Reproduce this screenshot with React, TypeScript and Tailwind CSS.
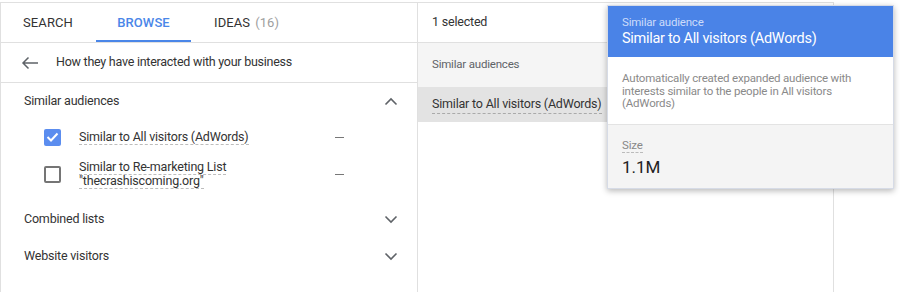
import React from "react";

const font = { fontFamily: "Roboto, 'Liberation Sans', sans-serif" };

function ChevronUp() {
  return (
    <svg width="14" height="9" viewBox="0 0 14 9" className="block">
      <polyline points="1.5,7.5 7,2 12.5,7.5" fill="none" stroke="#5f6368" strokeWidth="1.6" />
    </svg>
  );
}
function ChevronDown() {
  return (
    <svg width="14" height="9" viewBox="0 0 14 9" className="block">
      <polyline points="1.5,1.5 7,7 12.5,1.5" fill="none" stroke="#5f6368" strokeWidth="1.6" />
    </svg>
  );
}

function Dash() {
  return <span className="block w-[9px] h-px bg-[#777]" />;
}

export default function App() {
  return (
    <div className="relative w-[900px] h-[292px] bg-white overflow-hidden text-[#333]" style={font}>
      <div className="flex pt-[2px] h-full">
        {/* Left panel */}
        <div className="w-[418px] border-t border-l border-r border-[#e0e0e0] flex flex-col">
          <div className="flex h-[40px] border-b border-[#e0e0e0] text-[13px] tracking-[0.1px]">
            <div className="w-[95px] flex items-center pl-[22px] text-[#333]">SEARCH</div>
            <div className="w-[95px] flex items-center justify-center relative text-[#4a86e8] font-medium">
              BROWSE
              <span className="absolute left-0 right-0 bottom-0 h-[2px] bg-[#4a86e8]" />
            </div>
            <div className="flex items-center pl-[23px] text-[#333]">
              IDEAS<span className="ml-[5px] text-[#9e9e9e]">(16)</span>
            </div>
          </div>
          <div className="flex items-center h-[40px] border-b border-[#e0e0e0]">
            <svg width="18" height="14" viewBox="0 0 18 14" className="ml-[20px]">
              <path d="M17 7H2M7.5 1.5L2 7l5.5 5.5" fill="none" stroke="#5f6368" strokeWidth="1.5" />
            </svg>
            <span className="ml-[17px] text-[12.5px] tracking-[-0.25px] text-[#333]">How they have interacted with your business</span>
          </div>
          <div className="flex items-center justify-between h-[36px] pl-[23px] pr-[19px] text-[12.5px] tracking-[-0.2px]">
            <span>Similar audiences</span>
            <ChevronUp />
          </div>
          <div className="flex items-center h-[36px] pl-[43px] text-[12.5px] tracking-[-0.2px]">
            <span className="w-[17px] h-[17px] rounded-[2px] bg-[#5b8def] flex items-center justify-center">
              <svg width="13" height="10" viewBox="0 0 13 10">
                <polyline points="1.5,5 5,8.5 11.5,1.5" fill="none" stroke="white" strokeWidth="2" />
              </svg>
            </span>
            <span className="ml-[18px] w-[256px]">
              <span className="border-b border-dashed border-[#bdbdbd]">Similar to All visitors (AdWords)</span>
            </span>
            <Dash />
          </div>
          <div className="flex items-center h-[38px] pl-[43px] text-[12.5px] tracking-[-0.2px]">
            <span className="w-[17px] h-[17px] rounded-[2px] border-2 border-[#757575]" />
            <span className="ml-[18px] w-[256px] leading-[14px]">
              <span className="border-b border-dashed border-[#bdbdbd]">
                Similar to Re-marketing List
                <br />
                "thecrashiscoming.org"
              </span>
            </span>
            <Dash />
          </div>
          <div className="h-[8px]" />
          <div className="flex items-center justify-between h-[37px] pl-[23px] pr-[19px] text-[12.5px] tracking-[-0.2px]">
            <span>Combined lists</span>
            <ChevronDown />
          </div>
          <div className="flex items-center justify-between h-[37px] pl-[23px] pr-[19px] text-[12.5px] tracking-[-0.2px]">
            <span>Website visitors</span>
            <ChevronDown />
          </div>
        </div>
        {/* Right panel */}
        <div className="w-[416px] border-t border-r border-[#e0e0e0] flex flex-col">
          <div className="flex items-center h-[40px] border-b border-[#e0e0e0] pl-[14px] text-[12.5px] tracking-[-0.2px] text-[#333]">
            1 selected
          </div>
          <div className="flex items-center h-[44px] bg-[#f5f5f5] pl-[14px] text-[11.5px] tracking-[-0.2px] text-[#5f6368]">
            Similar audiences
          </div>
          <div className="flex items-center h-[35px] bg-[#e3e3e3] pl-[14px] text-[12.5px] tracking-[-0.2px] text-[#333]">
            <span className="border-b border-dashed border-[#aaa]">Similar to All visitors (AdWords)</span>
          </div>
        </div>
      </div>

      {/* Popup */}
      <div className="absolute left-[607px] top-[5px] w-[287px] bg-white border border-[#d6dbe6] shadow-[0_2px_6px_rgba(0,0,0,0.28)]">
        <div className="bg-[#4a83e7] h-[51px] pl-[14px] pt-[9px]">
          <div className="text-[11.5px] tracking-[-0.2px] leading-[14px] text-[#cddcfa]">Similar audience</div>
          <div className="text-[14.5px] tracking-[-0.3px] leading-[20px] text-white">Similar to All visitors (AdWords)</div>
        </div>
        <div className="h-[67px] pl-[14px] pr-[20px] pt-[15px] text-[11.5px] tracking-[-0.2px] leading-[12.5px] text-[#8a8a8a]">
          Automatically created expanded audience with interests similar to the people in All visitors (AdWords)
        </div>
        <div className="bg-[#f4f4f4] border-t border-[#e3e3e3] h-[64px] pl-[14px] pt-[13px]">
          <div className="text-[11.5px] tracking-[-0.2px] leading-[15px] text-[#888]">
            <span className="border-b border-dashed border-[#bbb]">Size</span>
          </div>
          <div className="text-[17px] leading-[22px] mt-[3px] text-[#222]">1.1M</div>
        </div>
      </div>
    </div>
  );
}
